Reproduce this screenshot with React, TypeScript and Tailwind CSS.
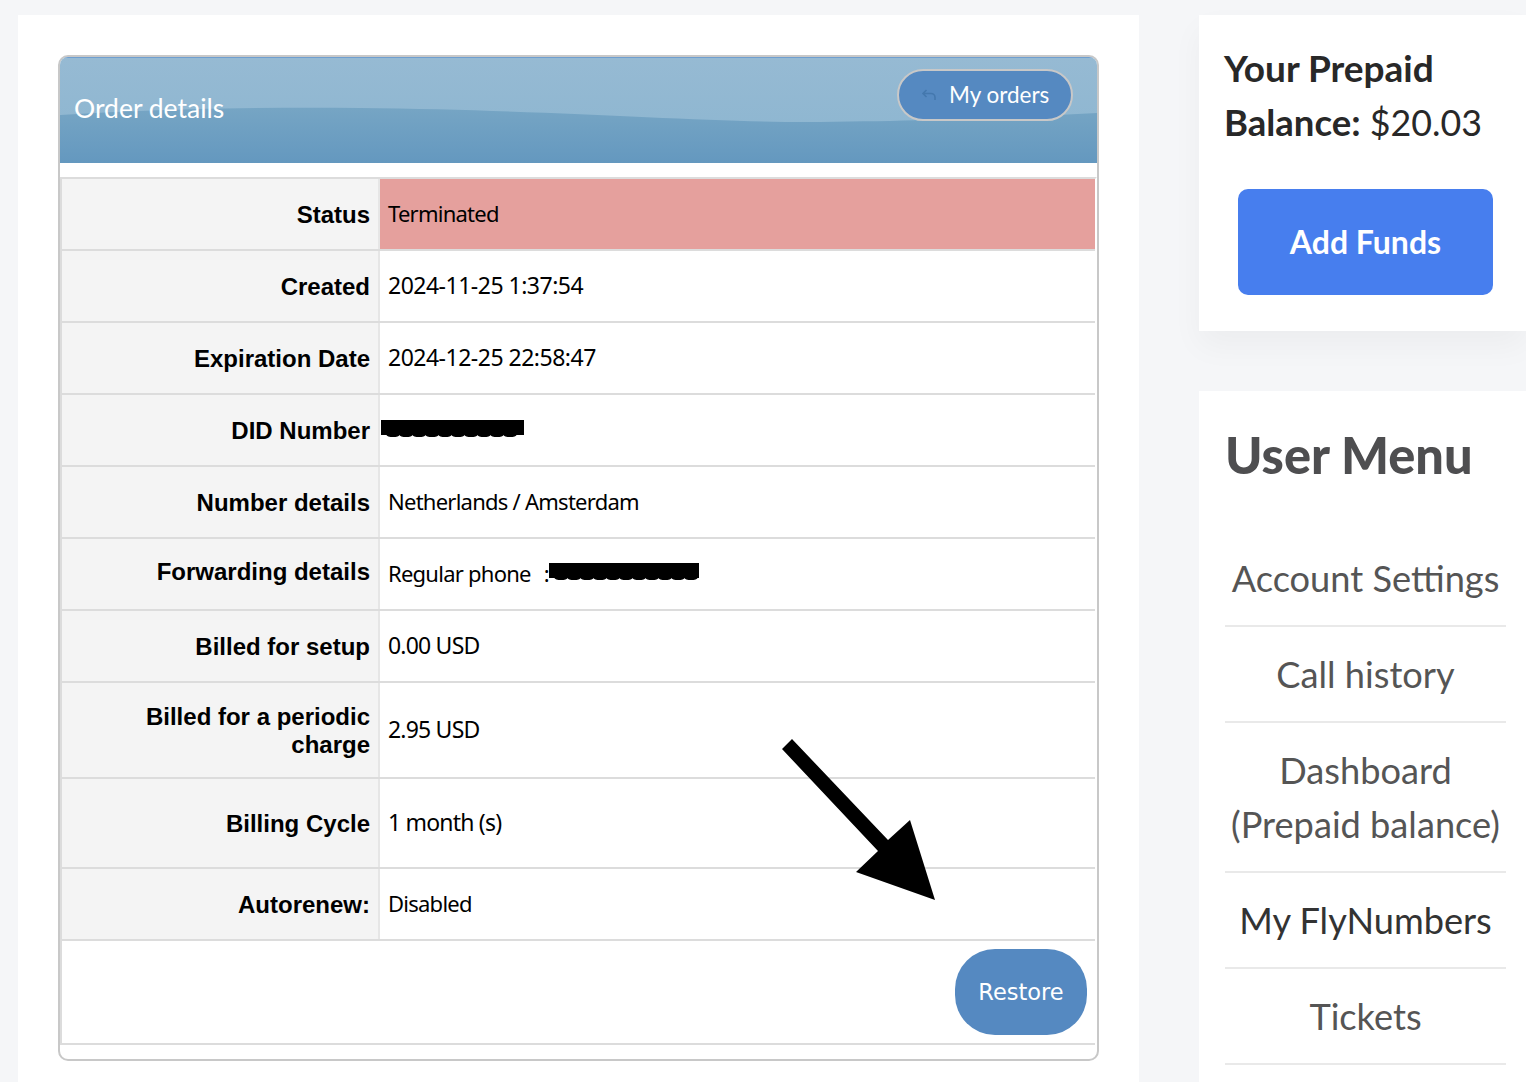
import React from 'react';

const words = "text-[22px] tracking-[-0.75px]";
const dates = "text-[23px] tracking-[-0.5px]";
const amounts = "text-[23px] tracking-[-0.8px]";

const rows = [
  { label: 'Status', value: 'Terminated', h: 'h-[70px]', bg: 'bg-[#e5a09d]', type: words },
  { label: 'Created', value: '2024-11-25 1:37:54', h: 'h-[70px]', type: dates },
  { label: 'Expiration Date', value: '2024-12-25 22:58:47', h: 'h-[70px]', type: dates },
  { label: 'DID Number', redact: 'did', h: 'h-[70px]' },
  { label: 'Number details', value: 'Netherlands / Amsterdam', h: 'h-[70px]', type: words },
  { label: 'Forwarding details', value: 'Regular phone', redact: 'phone', h: 'h-[70px]', type: words, lift: 'pb-[4px]' },
  { label: 'Billed for setup', value: '0.00 USD', h: 'h-[70px]', type: amounts },
  { label: 'Billed for a periodic charge', value: '2.95 USD', h: 'h-[94px]', type: amounts },
  { label: 'Billing Cycle', value: '1 month (s)', h: 'h-[88px]', type: amounts },
  { label: 'Autorenew:', value: 'Disabled', h: 'h-[70px]', type: words },
];

const menu = ['Account Settings', 'Call history', 'Dashboard (Prepaid balance)', 'My FlyNumbers', 'Tickets'];

// black marker stroke over a number, the digits' lower edge still shows under it
const Redaction = ({ width }: { width: number }) => (
  <svg width={width} height="19" viewBox={`0 0 ${width} 19`} className="block">
    <rect width={width} height="15" fill="#000" />
    {Array.from({ length: Math.round((width - 8) / 13) }).map((_, i) => (
      <ellipse key={i} cx={12 + i * 13} cy="15" rx="6.5" ry="2" fill="#000" />
    ))}
  </svg>
);

const Row = ({ row }: { row: (typeof rows)[number] }) => (
  <div className="flex border-b-2 border-[#dcdcdc]">
    <div className={`${row.h} ${row.lift ?? 'pt-[2px]'} w-[318px] shrink-0 flex items-center justify-end text-right pl-16 pr-2 bg-[#f4f4f4] border-r-2 border-[#e6e6e6] font-bold text-[24px] leading-7 text-black font-['Liberation_Sans',sans-serif]`}>
      {row.label}
    </div>
    <div className={`${row.bg ?? ''} ${row.type ?? ''} flex-1 flex items-center pl-2 pb-[1px] text-black font-['Noto_Sans',sans-serif]`}>
      {row.value && <span>{row.value}</span>}
      {row.redact === 'did' && (
        <span className="-ml-[7px]">
          <Redaction width={143} />
        </span>
      )}
      {row.redact === 'phone' && (
        <>
          <span className="ml-[13px]">:</span>
          <span className="-mt-[2px]">
            <Redaction width={150} />
          </span>
        </>
      )}
    </div>
  </div>
);

export default function App() {
  return (
    <div className="h-[1082px] overflow-hidden bg-[#f5f6f8] pt-[15px] pl-[18px] flex gap-[60px] font-['Lato',sans-serif]">
      <div className="w-[1121px] shrink-0 bg-white pt-[40px] px-[40px] h-[1067px]">
        <div className="relative h-[1006px] rounded-[10px] border-2 border-[#c8c8c8] overflow-hidden">
          <div className="relative h-[106px] border-t border-[#6f9fd0] bg-gradient-to-b from-[#96bad3] to-[#8bb5d0] overflow-hidden">
            <svg className="absolute inset-0 w-full h-full" viewBox="0 0 1037 105" preserveAspectRatio="none">
              <defs>
                <linearGradient id="wave" x1="0" y1="0" x2="0" y2="1">
                  <stop offset="0" stopColor="#76a5c4" />
                  <stop offset="1" stopColor="#6498bf" />
                </linearGradient>
              </defs>
              <path d="M0 57 C100 51 200 49 300 50 C500 52 650 65 760 64 C880 63 960 59 1037 55 V105 H0 Z" fill="url(#wave)" />
            </svg>
            <div className="absolute left-[14px] top-[33px] text-[26.5px] leading-[34px] text-white">Order details</div>
            <div className="absolute right-[24px] top-[11px] w-[176px] h-[52px] rounded-full bg-[#5589c1] border-2 border-[#c8c8c8] flex items-center pl-[22px] gap-[12px] text-white text-[22.5px]">
              <svg className="w-[16px] h-[16px] text-[#4478ae]" viewBox="0 0 16 16" fill="none" stroke="currentColor" strokeWidth="1.6">
                <path d="M5.5 3 2 6.5 5.5 10M2 6.5h8a4 4 0 0 1 4 4V13" />
              </svg>
              <span>My orders</span>
            </div>
          </div>
          <div className="mt-[14px] border-t-2 border-[#dcdcdc] border-l-2 border-r-2 border-l-[#dcdcdc] border-r-white">
            {rows.map((r) => (
              <Row key={r.label} row={r} />
            ))}
            <div className="h-[104px] flex justify-end items-center pr-[8px] border-b-2 border-[#dcdcdc]">
              <div className="w-[132px] h-[86px] pt-[1px] rounded-[40px] bg-[#5589c1] flex items-center justify-center text-white text-[22.5px] font-['DejaVu_Sans',sans-serif]">Restore</div>
            </div>
          </div>
          <svg className="absolute left-[720px] top-[682px] w-[160px] h-[165px]" viewBox="0 0 160 165">
            <path d="M2 10 12 0 108 101 130 81 155 161 76 133 98 112Z" fill="#000" />
          </svg>
        </div>
      </div>
      <div className="flex-1 min-w-0 flex flex-col gap-[60px]">
        <div className="h-[316px] shrink-0 bg-white shadow-[0_15px_30px_rgba(0,0,0,0.04)] pt-[27px] pl-[25px]">
          <div className="-mt-[1px] text-[36px] leading-[54px] text-[#282828]">
            <b className="text-[37px]">Your Prepaid</b>
            <br />
            <b className="text-[36.5px]">Balance:</b> <span className="text-[35.8px]">$20.03</span>
          </div>
          <div className="mt-[39px] ml-[14px] w-[255px] h-[106px] rounded-[10px] bg-[#477eee] flex items-center justify-center text-white font-bold text-[32px]">Add Funds</div>
        </div>
        <div className="flex-1 bg-white pl-[26px] pr-[20px]">
          <div className="pt-[33px] text-[50.5px] leading-[62px] font-black whitespace-nowrap text-[#4e4e50]">User Menu</div>
          <div className="mt-[45px] text-center text-[36.2px] leading-[54px] text-[#555555]">
            {menu.map((m) => (
              <div key={m} className={`py-[20px] border-b-2 border-[#e9e9e9] ${m === 'My FlyNumbers' ? 'text-[#333333]' : ''}`}>{m}</div>
            ))}
          </div>
        </div>
      </div>
    </div>
  );
}
